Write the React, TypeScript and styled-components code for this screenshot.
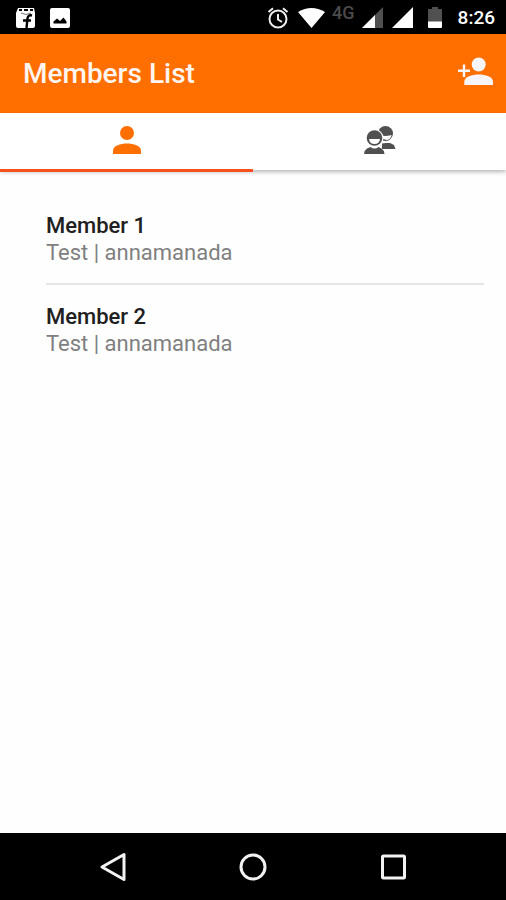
import React, { useState } from "react";
import styled, { createGlobalStyle } from "styled-components";

const GlobalStyle = createGlobalStyle`
  *, *::before, *::after { box-sizing: border-box; }
  body { margin: 0; background: #fff; font-family: Roboto, sans-serif; }
  button { border: 0; padding: 0; background: none; font: inherit; cursor: pointer; }
`;

const Screen = styled.div`
  display: flex;
  flex-direction: column;
  min-height: 100vh;
  background: #fefefe;
`;

const StatusBar = styled.div`
  display: flex;
  align-items: center;
  justify-content: space-between;
  height: 34px;
  padding: 1px 11px 0 16px;
  background: #000;
  color: #fff;
`;

const StatusGroup = styled.div<{ $gap: number }>`
  display: flex;
  align-items: center;
  gap: ${(p) => p.$gap}px;
`;

const Network = styled.span`
  align-self: flex-start;
  margin: 0 -2px;
  font-size: 18px;
  font-weight: 500;
  line-height: 14px;
  color: #4a4a4a;
`;

const Power = styled.div`
  display: flex;
  align-items: center;
  gap: 16px;
  margin-left: 6px;
`;

const Clock = styled.time`
  font-size: 19px;
  font-weight: 500;
  line-height: 24px;
`;

const AppBar = styled.header`
  display: flex;
  align-items: center;
  justify-content: space-between;
  height: 79px;
  padding: 0 13px 0 23px;
  background: #ff6f00;
  color: #fff5f0;
`;

const Title = styled.h1`
  margin: 0;
  font-size: 28px;
  font-weight: 500;
  line-height: 32px;
`;

const IconButton = styled.button`
  display: flex;
  padding-bottom: 5px;
  color: #f8f5f8;
`;

const Tabs = styled.div`
  display: grid;
  grid-template-columns: 1fr 1fr;
  height: 57px;
  background: #fff;
  box-shadow: 0 2px 4px rgba(0, 0, 0, 0.28);
`;

const Tab = styled.button<{ $active: boolean }>`
  display: flex;
  justify-content: center;
  align-items: center;
  height: 59px;
  padding-bottom: 3px;
  border-bottom: 3px solid ${(p) => (p.$active ? "#f4511e" : "transparent")};
  color: ${(p) => (p.$active ? "#ff6f00" : "#505050")};
`;

const List = styled.ul`
  flex: 1;
  margin: 0;
  padding: 24px 22px 0 46px;
  list-style: none;
`;

const Member = styled.li`
  padding: 18px 0 17px;

  & + & {
    border-top: 2px solid #e6e6e6;
  }
`;

const Name = styled.div`
  font-size: 22px;
  font-weight: 500;
  line-height: 27px;
  color: #202020;
`;

const Detail = styled.div`
  font-size: 22px;
  line-height: 27px;
  color: #808080;
`;

const NavBar = styled.nav`
  display: flex;
  justify-content: center;
  height: 67px;
  background: #000;
`;

const NavButtons = styled.div`
  display: grid;
  grid-template-columns: repeat(3, 1fr);
  width: 83%;
`;

const NavButton = styled.button`
  display: flex;
  align-items: center;
  justify-content: center;
`;

const StoreIcon = () => (
  <svg width="20" height="20" viewBox="0 0 20 20" aria-hidden="true">
    <path d="M2 0h16l1 5v13q0 2-2 2H2q-2 0-2-2V5z" fill="#fff" />
    <path d="M3 1h3v2H3zM8 1h4v2H8zM14 1h3v2h-3z" fill="#000" />
    <path d="M5 5q5 3 10 0" fill="none" stroke="#777" strokeWidth="1" />
    <path d="M16 7.500q-4-1-4.500 3L10.500 20M7 12.500h8" fill="none" stroke="#000" strokeWidth="2.400" />
  </svg>
);

const PhotoIcon = () => (
  <svg width="20" height="20" viewBox="0 0 20 20" aria-hidden="true">
    <rect width="20" height="20" rx="2" fill="#fff" />
    <path d="M3.500 15.500v-2l3.500-3 3 2.500 3.500-3.500 3 4v2z" fill="#000" />
  </svg>
);

const AlarmIcon = () => (
  <svg width="22" height="22" viewBox="0 0 22 22" fill="none" stroke="#eee" strokeWidth="2" aria-hidden="true">
    <circle cx="11" cy="12" r="8.500" />
    <path d="M1.500 5 6 1.200M20.500 5 16 1.200M11 7v5.500l4 2.500" />
  </svg>
);

const WifiIcon = () => (
  <svg width="27" height="20" viewBox="0 0 27 20" aria-hidden="true">
    <path d="M0 4Q13.500-4 27 4L13.500 20z" fill="#fff" />
  </svg>
);

const SignalIcon = ({ weak = false }: { weak?: boolean }) => (
  <svg width="21" height="21" viewBox="0 0 21 21" aria-hidden="true">
    <path d="M21 0v21H0z" fill={weak ? "#505050" : "#fff"} />
    {weak && <path d="M13 8v13H0z" fill="#fff" />}
  </svg>
);

const BatteryIcon = () => (
  <svg width="14" height="21" viewBox="0 0 14 21" aria-hidden="true">
    <path d="M4 0h6v2h4v13H0V2h4z" fill="#505050" />
    <path d="M0 14.500h14V20q0 1-1 1H1q-1 0-1-1z" fill="#fff" />
  </svg>
);

const AddPersonIcon = () => (
  <svg width="35" height="28" viewBox="0 0 35 28" fill="currentColor" aria-hidden="true">
    <circle cx="20.700" cy="7.500" r="7" />
    <path d="M6.300 28v-3.500C6.300 20 14 17.500 20.700 17.500S35 20 35 24.500V28z" />
    <path d="M4.800 7.500h2.400v5h4.800v2.400H7.200v5H4.800v-5H0v-2.400h4.800z" />
  </svg>
);

const PersonIcon = () => (
  <svg width="28" height="28" viewBox="0 0 28 28" fill="currentColor" aria-hidden="true">
    <circle cx="14" cy="7" r="7" />
    <path d="M0 28v-3.500C0 20 7.500 17.500 14 17.500S28 20 28 24.500V28z" />
  </svg>
);

const GroupIcon = () => (
  <svg width="32" height="28" viewBox="0 0 32 28" aria-hidden="true">
    <circle cx="21.500" cy="7.500" r="7.500" fill="currentColor" />
    <path d="M17 9.500q5 1 10.500-.5-.5 4.500-5 5-3 0-5-3z" fill="#fff" />
    <path d="M18 23v-5.500l4-.5h4l4 2 1.500 4z" fill="currentColor" />
    <circle cx="10.500" cy="12" r="9" fill="#fff" />
    <circle cx="10.500" cy="12" r="7.800" fill="currentColor" />
    <path d="M5 13h11q-.5 5-5.500 5T5 13z" fill="#fff" />
    <path d="M0 28q.5-4 3-5.500l3.500-1.500q4 3 8 0l3 1.500q2.500 1.500 3 5.500z" fill="currentColor" />
  </svg>
);

const navShapes = [
  { label: "Back", shape: <path d="M4 15 26 2.500v25z" /> },
  { label: "Home", shape: <circle cx="15" cy="15" r="12" /> },
  { label: "Recent apps", shape: <rect x="4.500" y="4" width="22" height="22" rx="1" /> },
];

const members = [
  { name: "Member 1", detail: "Test | annamanada" },
  { name: "Member 2", detail: "Test | annamanada" },
];

const tabs = [
  { label: "Members", icon: <PersonIcon /> },
  { label: "Groups", icon: <GroupIcon /> },
];

export default function App() {
  const [active, setActive] = useState(0);

  return (
    <Screen>
      <GlobalStyle />
      <StatusBar>
        <StatusGroup $gap={14}>
          <StoreIcon />
          <PhotoIcon />
        </StatusGroup>
        <StatusGroup $gap={9}>
          <AlarmIcon />
          <WifiIcon />
          <Network>4G</Network>
          <SignalIcon weak />
          <SignalIcon />
          <Power>
            <BatteryIcon />
            <Clock>8:26</Clock>
          </Power>
        </StatusGroup>
      </StatusBar>
      <AppBar>
        <Title>Members List</Title>
        <IconButton type="button" aria-label="Add member">
          <AddPersonIcon />
        </IconButton>
      </AppBar>
      <Tabs role="tablist">
        {tabs.map((tab, i) => (
          <Tab
            key={tab.label}
            type="button"
            role="tab"
            aria-label={tab.label}
            aria-selected={i === active}
            $active={i === active}
            onClick={() => setActive(i)}
          >
            {tab.icon}
          </Tab>
        ))}
      </Tabs>
      <List>
        {members.map((m) => (
          <Member key={m.name}>
            <Name>{m.name}</Name>
            <Detail>{m.detail}</Detail>
          </Member>
        ))}
      </List>
      <NavBar>
        <NavButtons>
          {navShapes.map((n) => (
            <NavButton key={n.label} type="button" aria-label={n.label}>
              <svg
                width="30"
                height="30"
                viewBox="0 0 30 30"
                fill="none"
                stroke="#f2f2f2"
                strokeWidth="3"
                strokeLinejoin="round"
                aria-hidden="true"
              >
                {n.shape}
              </svg>
            </NavButton>
          ))}
        </NavButtons>
      </NavBar>
    </Screen>
  );
}
